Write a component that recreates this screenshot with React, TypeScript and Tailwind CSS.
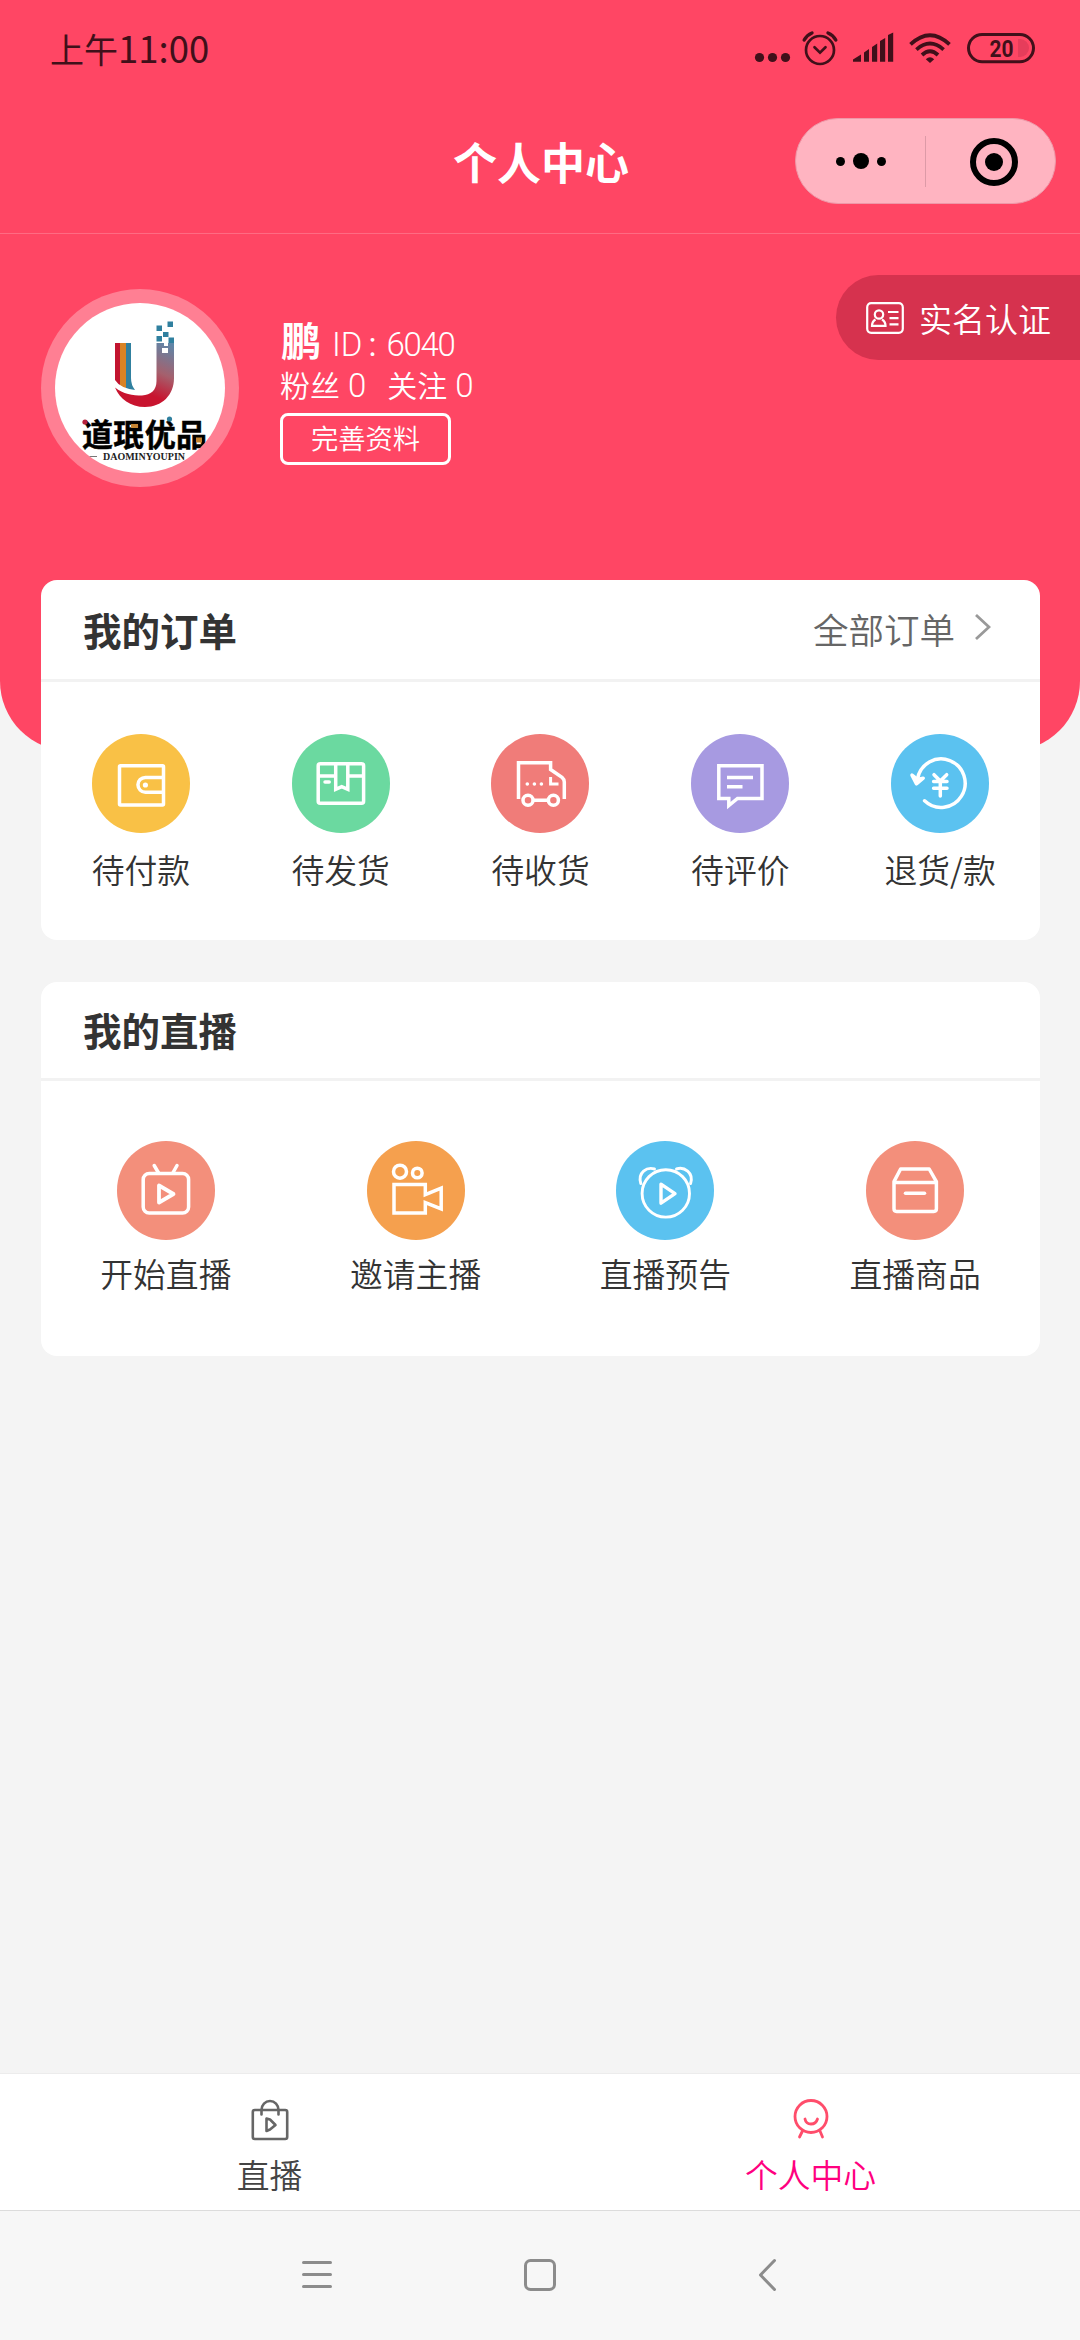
import type { ReactNode } from "react";

type Entry = {
  label: string;
  color: string;
  icon: ReactNode;
};

const WalletIcon = () => (
  <>
    <rect x="27.5" y="31.8" width="44" height="39.2" rx="1" />
    <path d="M71.5 43.4H53.4a7.45 7.45 0 0 0 0 14.9H71.5" />
    <circle cx="53.4" cy="51" r="2.6" fill="white" stroke="none" />
  </>
);

const PackageIcon = () => (
  <>
    <rect x="26.2" y="29.8" width="45.4" height="39.4" rx="2" />
    <path d="M26.2 42H43.7M55.8 42H71.6M43.7 29.8V55.3L49.7 52.6L55.8 55.3V29.8" />
    <path d="M33 48H37.2" strokeLinecap="round" />
  </>
);

const TruckIcon = () => (
  <>
    <path d="M27.5 65V28.7H59.6V35.5L71 43.4Q73.3 45.4 73.3 48V65M42.4 66.2H57" />
    <circle cx="37" cy="66.2" r="5" />
    <circle cx="62.4" cy="66.2" r="5" />
    <path d="M59.6 43V50H67.5" strokeWidth="3" />
    <path
      d="M36.3 50h.01M43.4 50h.01M50.4 50h.01"
      strokeLinecap="round"
      strokeWidth="3.6"
    />
  </>
);

const CommentIcon = () => (
  <path d="M27.8 31.7H71V64.5H46.5L37.8 71.5V64.5H27.8ZM36 43.5H62M36 52.7H51.5" />
);

const RefundIcon = () => (
  <>
    <path d="M26.5 45A24 24.3 0 1 1 33.6 66.8" strokeLinecap="round" />
    <path
      d="M21 41.2L25.4 49.8L32.2 44.2L26.5 45.5Z"
      fill="white"
      strokeLinejoin="round"
    />
    <path
      d="M43 40.7L49.3 47L55.7 40.7M49.3 47V62M42.6 47.6H56M42.6 54.3H56"
      strokeLinecap="round"
    />
  </>
);

const TvIcon = () => (
  <>
    <rect x="26.2" y="32.4" width="45.4" height="39.6" rx="6" />
    <path d="M37.2 24.5L41.6 32M60 24.5L55.8 32" strokeLinecap="round" />
    <path d="M42 44.5V61.5L56.5 53Z" strokeLinejoin="round" strokeWidth="3.8" />
  </>
);

const CameraIcon = () => (
  <>
    <circle cx="33" cy="30.7" r="6.5" />
    <circle cx="50.3" cy="32" r="4.8" />
    <path d="M27 43.6H58.3V53.6L74.2 47.2V68L58.3 61.7V72H27Z" />
  </>
);

const AlarmPlayIcon = () => (
  <g strokeWidth="2.9">
    <circle cx="49.8" cy="52.4" r="23.7" />
    <path
      d="M38.5 28C31 25.5 21.5 31.5 24.8 42.5M60.5 28C68 25.5 78 31.5 74.6 42.5"
      strokeLinecap="round"
    />
    <path d="M45 43.2V62.2L59 52.6Z" strokeLinejoin="round" strokeWidth="3.4" />
  </g>
);

const GoodsIcon = () => (
  <g strokeLinejoin="round">
    <path d="M28 40.6L34.6 28H63.2L70.4 40.6V67.8Q70.4 70.4 67.8 70.4H30.6Q28 70.4 28 67.8ZM28 41.5H70.4" />
    <path d="M39.5 52.2H58.5" strokeLinecap="round" />
  </g>
);

const orders: Entry[] = [
  { label: "待付款", color: "bg-[#f9c146]", icon: <WalletIcon /> },
  { label: "待发货", color: "bg-[#6bd9a0]", icon: <PackageIcon /> },
  { label: "待收货", color: "bg-[#f07c79]", icon: <TruckIcon /> },
  { label: "待评价", color: "bg-[#a79ae1]", icon: <CommentIcon /> },
  { label: "退货/款", color: "bg-[#5bc2f0]", icon: <RefundIcon /> },
];

const lives: Entry[] = [
  { label: "开始直播", color: "bg-[#f38f7b]", icon: <TvIcon /> },
  { label: "邀请主播", color: "bg-[#f5a04e]", icon: <CameraIcon /> },
  { label: "直播预告", color: "bg-[#5bc2f0]", icon: <AlarmPlayIcon /> },
  { label: "直播商品", color: "bg-[#f38f7b]", icon: <GoodsIcon /> },
];

const EntryItem = ({ entry, gap }: { entry: Entry; gap: string }) => (
  <div className={`flex flex-1 flex-col items-center ${gap}`}>
    <div className={`h-[99px] w-[98px] rounded-full ${entry.color}`}>
      <svg
        className="h-full w-full"
        viewBox="0 0 98 99"
        fill="none"
        stroke="white"
        strokeWidth="3.5"
      >
        {entry.icon}
      </svg>
    </div>
    <span className="text-[32.8px] leading-[40px] font-[350] text-[#333]">
      {entry.label}
    </span>
  </div>
);

const StatusBar = () => (
  <div className="flex h-[98px] items-center justify-between pr-[45px] pl-[50px] text-[#40101a]">
    <span className="mb-[2px] text-[34px] leading-[40px]">
      上午<span className="text-[36.5px]">11:00</span>
    </span>
    <svg className="h-[40px] w-[282px]" viewBox="0 0 282 40" fill="none">
      <g fill="currentColor">
        <circle cx="6.5" cy="28.5" r="4.6" />
        <circle cx="19.5" cy="28.5" r="4.6" />
        <circle cx="32.5" cy="28.5" r="4.6" />
        <path d="M100 32.8V30.5L108 25.5V32.8ZM111 32.8V23.5L116 20V32.8ZM119 32.8V18L124.2 14.5V32.8ZM127 32.8V12L132.2 9V32.8ZM135 32.8V6L140.2 3.5V32.8Z" />
        <path d="M177 34L172.8 30.3Q177 26 181.2 30.3Z" />
      </g>
      <g stroke="currentColor" strokeWidth="2.7">
        <circle cx="67" cy="21" r="14" />
        <path d="M61.5 18.3L67 23.6L72.5 18.3" strokeLinecap="round" />
        <path
          d="M51.2 11Q54 6 59 4M82.8 11Q80 6 75 4"
          strokeLinecap="round"
          strokeWidth="3.4"
        />
      </g>
      <g stroke="currentColor" strokeWidth="3.8">
        <path d="M157.5 15.3Q177 -3 196.5 15.3M163.4 20.6Q177 8.6 190.6 20.6M169 26Q177 18.6 185 26" />
      </g>
      <path d="M265 10h2a9 9 0 0 1 0 18h-2z" fill="#e63d5b" />
      <rect
        x="215.5"
        y="5.5"
        width="65"
        height="27.2"
        rx="13.6"
        stroke="currentColor"
        strokeWidth="3"
      />
      <text
        x="248.5"
        y="27.7"
        fill="currentColor"
        className="text-[24px] font-bold"
        fontFamily="Roboto, sans-serif"
        textAnchor="middle"
        textLength="24"
        lengthAdjust="spacingAndGlyphs"
      >
        20
      </text>
    </svg>
  </div>
);

const TitleBar = () => (
  <div className="relative flex h-[136px] items-center justify-center border-b border-white/20 pb-[10px] pl-[2px]">
    <h1 className="text-[44px] leading-[50px] font-bold text-white">
      个人中心
    </h1>
    <div className="absolute top-[20px] right-[24px] flex h-[86px] w-[261px] items-center rounded-full border border-[#ee98a8] bg-[#ffb4c1]">
      <div className="flex w-[129px] items-center justify-center gap-[8px]">
        <i className="size-[9px] rounded-full bg-black" />
        <i className="size-[16px] rounded-full bg-black" />
        <i className="size-[9px] rounded-full bg-black" />
      </div>
      <div className="h-[51px] w-px bg-[#dd9aa7]" />
      <div className="flex flex-1 items-center justify-center pt-px pl-[6px]">
        <div className="flex size-[48px] items-center justify-center rounded-full border-[6px] border-black">
          <i className="size-[18px] rounded-full bg-black" />
        </div>
      </div>
    </div>
  </div>
);

const Avatar = () => (
  <div className="size-[198px] rounded-full bg-[#ff7f93] p-[14px]">
    <svg className="size-[170px] rounded-full bg-white" viewBox="0 0 170 170">
      <defs>
        <linearGradient id="hook" x1="0.9" y1="0" x2="0.5" y2="1">
          <stop offset="0" stopColor="#5f86a8" />
          <stop offset="0.45" stopColor="#a5606d" />
          <stop offset="0.8" stopColor="#c8142f" />
        </linearGradient>
        <clipPath id="stem">
          <path d="M60 40H76V75Q76 82 80 87Q65 85 60 77Z" />
        </clipPath>
      </defs>
      <g clipPath="url(#stem)">
        <path d="M60 40h5v50h-5z" fill="#c2142f" />
        <path d="M65 40h6v50h-6z" fill="#d98324" />
        <path d="M71 40h10v50h-10z" fill="#30809f" />
      </g>
      <path
        d="M101.5 40H119V75C119 92 107 104 90 104C75 104 65 96 60 84.5C68 91 78 92.5 87 92.5C96 92 101.5 87 101.5 78Z"
        fill="url(#hook)"
      />
      <path d="M107 45h6v5h-6zM109 40h4v3h-4z" fill="white" />
      <path
        d="M101.5 22.5h5.5v5.5h-5.5zM112.5 18.5h5.5v5.5h-5.5zM108 29h5.5v5h-5.5zM101.5 33h5.5v5.5h-5.5zM113.5 34.5h5.5v5.5h-5.5z"
        fill="#30809f"
      />
      <text
        x="27"
        y="142.5"
        className="text-[31px] font-bold"
        stroke="black"
        strokeWidth="0.5"
        textLength="125"
      >
        道珉优品
      </text>
      <circle cx="30" cy="119" r="2.6" fill="#b8223e" />
      <circle cx="114.5" cy="116" r="2.6" fill="#30809f" />
      <path d="M76 121h7v4h-7zM141 134.5h6v5h-6z" fill="#c58433" />
      <path d="M33 153.5h9" stroke="#777" />
      <text
        x="48"
        y="157"
        className="text-[10.5px] font-bold"
        fontFamily="Liberation Serif, serif"
        textLength="82"
        lengthAdjust="spacingAndGlyphs"
        fill="#222"
      >
        DAOMINYOUPIN
      </text>
    </svg>
  </div>
);

const Profile = () => (
  <div className="flex items-start text-white">
    <div className="flex flex-1 pt-[55px] pl-[41px]">
      <Avatar />
      <div className="pt-[27px] pl-[41px]">
        <div className="flex h-[46px] items-baseline pl-px leading-[46px]">
          <span className="text-[40px] font-bold">鹏</span>
          <span className="ml-[11px] flex items-baseline font-[Roboto] text-[33px] font-light">
            ID
            <span className="mx-[6px] font-normal">:</span>
            <span className="ml-[4px] tracking-[-1.3px]">6040</span>
          </span>
        </div>
        <div className="flex h-[44px] items-baseline text-[30px] leading-[44px] font-[350]">
          粉丝
          <span className="ml-[8px] font-[Roboto] text-[33px] font-light">0</span>
          <span className="ml-[21px]">关注</span>
          <span className="ml-[8px] font-[Roboto] text-[33px] font-light">0</span>
        </div>
        <button className="mt-[7px] block h-[52px] w-[171px] rounded-[8px] border-[3px] border-white pb-[3px] text-[27.3px] leading-[43px] font-[350]">
          完善资料
        </button>
      </div>
    </div>
    <div className="mt-[41px] flex h-[85px] w-[244px] items-center rounded-l-full bg-[#d6324e] pl-[30px]">
      <svg
        className="h-[32px] w-[38px]"
        viewBox="0 0 38 32"
        fill="none"
        stroke="white"
        strokeWidth="2.2"
      >
        <rect x="1.2" y="1.2" width="35.6" height="29.6" rx="4" />
        <circle cx="13" cy="12.5" r="4.2" />
        <path d="M9.5 17.5Q6 19.5 6 23.8H19.5Q19.5 19.5 16 17.5M22 10H32.5M23.5 16.2H32.5M23.5 22.3H32.5" />
      </svg>
      <span className="ml-[15px] pt-px text-[33px] leading-[40px] font-[350]">
        实名认证
      </span>
    </div>
  </div>
);

const TabBar = () => (
  <div className="flex h-[137px] border-t border-[#ececec] bg-white text-[32.8px] leading-[40px] font-[350]">
    <div className="flex flex-1 flex-col items-center pt-[25px] text-[#444]">
      <svg
        className="h-[42px] w-[38px]"
        viewBox="0 0 38 42"
        fill="none"
        stroke="#666"
        strokeWidth="2.6"
        strokeLinecap="round"
        strokeLinejoin="round"
      >
        <rect x="1.8" y="11" width="34.4" height="29" rx="2" />
        <path d="M10.5 15.5V11a8.5 9 0 0 1 17 0V15.5" />
        <path d="M15.5 19.5V32L19 30.5L24.5 26L19 20.5Z" />
      </svg>
      <span className="mt-[13px]">直播</span>
    </div>
    <div className="flex flex-1 flex-col items-center pt-[25px] pl-[2px] text-[#ff007f]">
      <svg
        className="h-[42px] w-[38px]"
        viewBox="0 0 38 42"
        fill="none"
        stroke="#ff4d6b"
        strokeWidth="2.8"
        strokeLinecap="round"
      >
        <circle cx="19" cy="17.5" r="16" />
        <path d="M13 20Q14 25 19 25T25.5 20M10.5 32L7.5 38M28 32L30.5 38" />
      </svg>
      <span className="mt-[13px]">个人中心</span>
    </div>
  </div>
);

const NavBar = () => (
  <div className="flex h-[130px] justify-between border-t border-[#dcdcdc] bg-[#f7f7f7] px-[300px] pt-[47px]">
    <svg
      className="size-[34px]"
      viewBox="0 0 34 34"
      stroke="#8c8c8c"
      strokeWidth="3"
      strokeLinecap="round"
    >
      <path d="M3.5 4.5H30.5M3.5 16.5H30.5M3.5 28.5H30.5" />
    </svg>
    <svg
      className="size-[34px]"
      viewBox="0 0 34 34"
      fill="none"
      stroke="#8c8c8c"
      strokeWidth="3"
    >
      <rect x="2.5" y="2.5" width="29" height="29" rx="5" />
    </svg>
    <svg
      className="size-[34px]"
      viewBox="0 0 34 34"
      fill="none"
      stroke="#8c8c8c"
      strokeWidth="3"
      strokeLinecap="round"
      strokeLinejoin="round"
    >
      <path d="M28.5 2.5L14.5 17L28.5 31.5" />
    </svg>
  </div>
);

const App = () => {
  return (
    <div className="flex h-[2340px] w-[1080px] flex-col overflow-hidden bg-[#f4f4f4] font-['Noto_Sans_CJK_SC',sans-serif]">
      <header className="h-[751px] shrink-0 rounded-b-[70px] bg-[#ff4664]">
        <StatusBar />
        <TitleBar />
        <Profile />
      </header>

      <main className="-mt-[171px] mr-[40px] ml-[41px] flex flex-1 flex-col gap-[42px]">
        <section className="h-[360px] rounded-[16px] bg-white">
          <div className="flex h-[102px] items-center justify-between border-b-[3px] border-[#f2f2f2] pr-[49px] pb-[2px] pl-[42px]">
            <h2 className="text-[38.5px] leading-[50px] font-bold text-[#333]">
              我的订单
            </h2>
            <div className="flex items-center text-[35.5px] leading-[50px] font-[350] text-[#666]">
              全部订单
              <svg
                className="mb-[4px] ml-[18px] h-[28px] w-[18px]"
                viewBox="0 0 18 28"
                fill="none"
                stroke="#999"
                strokeWidth="2.8"
              >
                <path d="M3 2L16 14L3 26" />
              </svg>
            </div>
          </div>
          <div className="flex pt-[52px]">
            {orders.map((entry) => (
              <EntryItem key={entry.label} entry={entry} gap="gap-[16px]" />
            ))}
          </div>
        </section>

        <section className="h-[374px] rounded-[16px] bg-white">
          <div className="flex h-[99px] items-center border-b-[3px] border-[#f2f2f2] pb-[3px] pl-[42px]">
            <h2 className="text-[38.5px] leading-[50px] font-bold text-[#333]">
              我的直播
            </h2>
          </div>
          <div className="flex pt-[60px]">
            {lives.map((entry) => (
              <EntryItem key={entry.label} entry={entry} gap="gap-[13px]" />
            ))}
          </div>
        </section>
      </main>

      <footer>
        <TabBar />
        <NavBar />
      </footer>
    </div>
  );
};

export default App;
